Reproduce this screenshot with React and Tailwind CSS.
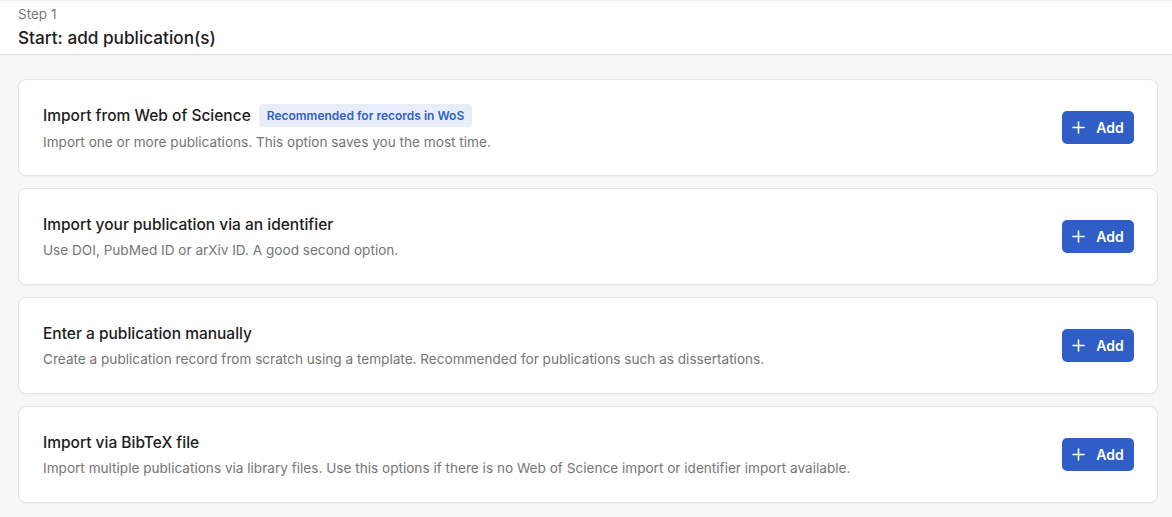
const options = [
  {
    title: "Import from Web of Science",
    badge: "Recommended for records in WoS",
    text: "Import one or more publications. This option saves you the most time.",
  },
  {
    title: "Import your publication via an identifier",
    text: "Use DOI, PubMed ID or arXiv ID. A good second option.",
  },
  {
    title: "Enter a publication manually",
    text: "Create a publication record from scratch using a template. Recommended for publications such as dissertations.",
  },
  {
    title: "Import via BibTeX file",
    text: "Import multiple publications via library files. Use this options if there is no Web of Science import or identifier import available.",
  },
];

function PlusIcon() {
  return (
    <svg width="13" height="13" viewBox="0 0 13 13" fill="none">
      <path d="M6.5 1v11M1 6.5h11" stroke="white" strokeWidth="1.6" strokeLinecap="round" />
    </svg>
  );
}

function OptionCard({ option }) {
  return (
    <div className="flex h-[97px] items-center justify-between rounded-[8px] border border-[#e4e4e4] bg-white pl-[24px] pr-[23px] shadow-[0_1px_2px_rgba(0,0,0,0.04)]">
      <div>
        <div className="flex items-center gap-[8px]">
          <h3 className="text-[15.5px] font-medium leading-[20px] text-[#1c1c1c]">{option.title}</h3>
          {option.badge && (
            <span className="rounded-[4px] bg-[#e8eef9] px-[8px] py-[3px] text-[12px] font-semibold leading-[17px] text-[#2f5fc6]">
              {option.badge}
            </span>
          )}
        </div>
        <p className="mt-[6px] text-[13.6px] leading-[18px] text-[#757575]">{option.text}</p>
      </div>
      <button className="flex h-[33px] w-[72px] items-center justify-center gap-[11px] rounded-[5px] bg-[#2f5fc6] text-[14px] font-semibold text-white">
        <PlusIcon />
        <span>Add</span>
      </button>
    </div>
  );
}

export default function App() {
  return (
    <div className="min-h-[517px] bg-[#f7f7f7] font-['Inter',sans-serif]">
      <header className="h-[55px] border-b border-[#dedede] bg-white px-[18px] pt-[5px] shadow-[inset_0_1px_0_#f0f0f0]">
        <p className="text-[13.5px] leading-[18px] text-[#7a7a7a]">Step 1</p>
        <h1 className="mt-[4px] text-[17.2px] font-medium leading-[22px] text-[#1c1c1c]">
          Start: add publication(s)
        </h1>
      </header>
      <main className="flex flex-col gap-[12px] pl-[18px] pr-[14px] pt-[24px] pb-[14px]">
        {options.map((option) => (
          <OptionCard key={option.title} option={option} />
        ))}
      </main>
    </div>
  );
}
